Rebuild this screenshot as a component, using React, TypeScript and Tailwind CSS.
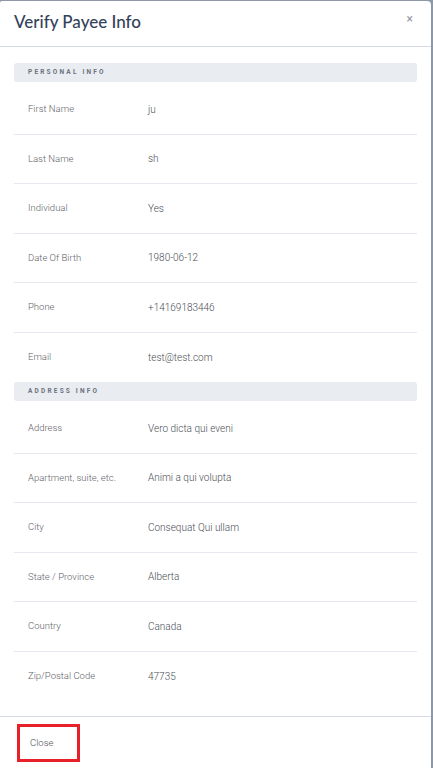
import React from "react";

const personal: [string, string][] = [
  ["First Name", "ju"],
  ["Last Name", "sh"],
  ["Individual", "Yes"],
  ["Date Of Birth", "1980-06-12"],
  ["Phone", "+14169183446"],
  ["Email", "test@test.com"],
];

const address: [string, string][] = [
  ["Address", "Vero dicta qui eveni"],
  ["Apartment, suite, etc.", "Animi a qui volupta"],
  ["City", "Consequat Qui ullam"],
  ["State / Province", "Alberta"],
  ["Country", "Canada"],
  ["Zip/Postal Code", "47735"],
];

function Section({ title, rows }: { title: string; rows: [string, string][] }) {
  return (
    <div>
      <div className="h-[19px] rounded-[3px] bg-[#e9ecf1] flex items-center pl-[14px]">
        <span className="text-[6.5px] font-bold tracking-[2.2px] text-[#6b7280]">{title}</span>
      </div>
      <div className="mt-[3px]">
        {rows.map(([k, v], i) => (
          <div
            key={k}
            className={
              "h-[49.5px] flex items-center pl-[14px] " +
              (i < rows.length - 1 ? "border-b border-[#e6e8f0]" : "")
            }
          >
            <span className="w-[120px] text-[9.5px] font-light text-[#5f636a]">{k}</span>
            <span className="text-[10px] font-light text-[#4a4e55]">{v}</span>
          </div>
        ))}
      </div>
    </div>
  );
}

export default function App() {
  return (
    <div className="w-[433px] h-[768px] bg-[#8d98a6] overflow-hidden" style={{ fontFamily: "Roboto, 'Liberation Sans', sans-serif" }}>
      <div className="mt-[1px] w-[431px] h-[800px] bg-white rounded-tr-[4px] rounded-tl-[2px] flex flex-col">
        <div className="h-[46px] border-b border-[#d6dbe3] flex items-start justify-between px-[14px]">
          <h1
            className="mt-[10px] text-[17px] font-medium text-[#34425a] leading-[22px]"
            style={{ fontFamily: "Lato, sans-serif" }}
          >
            Verify Payee Info
          </h1>
          <span className="mt-[9px] mr-[4px] text-[12px] text-[#9095a0] leading-[18px]">×</span>
        </div>
        <div className="px-[14px] pt-[16px]">
          <Section title="PERSONAL INFO" rows={personal} />
          <Section title="ADDRESS INFO" rows={address} />
        </div>
        <div className="mt-[15px] border-t border-[#d6dbe3] pt-[7px] pl-[17px]">
          <div className="w-[63px] h-[38px] border-[3px] border-[#e8202a] flex items-center pl-[10px]">
            <span className="text-[9.5px] font-light text-[#4a4e55]">Close</span>
          </div>
        </div>
      </div>
    </div>
  );
}
